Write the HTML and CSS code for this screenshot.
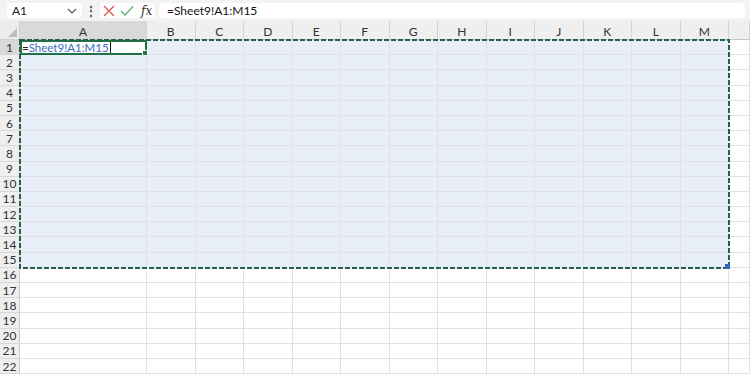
FILE: index.html
```html
<!DOCTYPE html>
<html>

<head>
    <title>Sheet</title>
    <link rel="stylesheet" href="styles.css">
</head>

<body>
    <div class="toolbar">
        <div class="name-box">
            <span>A1</span>
            <svg class="chevron" width="10" height="6" viewBox="0 0 10 6"><path d="M1 1 L5 5 L9 1" fill="none" stroke="#555" stroke-width="1.2"/></svg>
        </div>
        <div class="dots">&#8942;</div>
        <div class="fn-box">
            <svg width="12" height="12" viewBox="0 0 12 12"><path d="M1 1 L11 11 M11 1 L1 11" stroke="#d9534f" stroke-width="1.3" fill="none"/></svg>
            <svg width="14" height="12" viewBox="0 0 14 12"><path d="M1 6 L5 10 L13 1.5" stroke="#5cae6e" stroke-width="1.3" fill="none"/></svg>
            <span class="fx">fx</span>
        </div>
        <div class="formula">=Sheet9!A1:M15</div>
    </div>

    <div class="sheet" id="sheet">
        <div class="grid" id="grid"></div>
        <svg class="marquee" width="711" height="230" viewBox="0 0 711 230">
            <rect x="1" y="1" width="709" height="228" fill="none" stroke="#24624e" stroke-width="2" stroke-dasharray="5 2"/>
            <rect x="706" y="225" width="5" height="5" fill="#2f6cc0"/>
        </svg>
    </div>

    <script>
        const cols = ['A', 'B', 'C', 'D', 'E', 'F', 'G', 'H', 'I', 'J', 'K', 'L', 'M', ''];
        const grid = document.getElementById('grid');

        function cell(cls, text) {
            const d = document.createElement('div');
            d.className = cls;
            if (text) d.textContent = text;
            grid.appendChild(d);
            return d;
        }

        const corner = cell('corner');
        corner.innerHTML = '<svg width="9" height="9" viewBox="0 0 9 9"><path d="M9 0 L9 9 L0 9 Z" fill="#bdbdbd"/></svg>';
        cols.forEach((c, i) => cell(i === 0 ? 'col-head active' : 'col-head', c));

        for (let r = 1; r <= 22; r++) {
            cell(r === 1 ? 'row-head active' : 'row-head', String(r));
            cols.forEach((c, i) => {
                let cls = 'cell';
                if (r <= 15 && i < 13) cls += ' sel';
                const d = cell(cls);
                if (r === 1 && i === 0) {
                    d.className = 'cell current';
                    d.innerHTML = '<span class="eq">=</span><span class="ref">Sheet9!A1:M15</span><span class="caret"></span><span class="handle"></span>';
                }
            });
        }
    </script>

</body>

</html>
```

FILE: styles.css
```css
body {
    margin: 0;
    font-family: Lato, "Open Sans", sans-serif;
    background: #fff;
    width: 750px;
    height: 375px;
    overflow: hidden;
}

.toolbar {
    height: 21px;
    background-color: #f3f3f3;
    display: flex;
    align-items: center;
    padding-left: 7px;
    box-sizing: border-box;
}

.name-box {
    width: 75px;
    height: 15px;
    background: #fff;
    border-radius: 3px;
    display: flex;
    align-items: center;
    justify-content: space-between;
    padding: 0 5px 0 5px;
    box-sizing: border-box;
    font-size: 12px;
    color: #222;
}

.dots {
    width: 18px;
    text-align: center;
    font-size: 12px;
    font-weight: bold;
    color: #555;
}

.fn-box {
    width: 55px;
    height: 15px;
    background: #fff;
    border-radius: 3px;
    display: flex;
    align-items: center;
    gap: 5px;
    padding-left: 3px;
    box-sizing: border-box;
}

.fx {
    font-family: "DejaVu Serif", "Liberation Serif", serif;
    font-style: italic;
    font-size: 12px;
    color: #333;
    margin-left: 2px;
}

.formula {
    flex: 1;
    height: 15px;
    margin: 0 5px 0 4px;
    background: #fff;
    border-radius: 3px;
    font-size: 12px;
    line-height: 15px;
    padding-left: 8px;
    color: #111;
}

.sheet {
    position: relative;
}

.grid {
    display: grid;
    grid-template-columns: 20px 127px repeat(12, 48.5px) 1fr;
    grid-template-rows: 19px repeat(22, 15.2px);
}

.corner {
    background: #ececec;
    border-right: 1px solid #d0d0d0;
    border-bottom: 1px solid #d0d0d0;
    box-sizing: border-box;
    display: flex;
    align-items: flex-end;
    justify-content: flex-end;
    padding: 0 2px 2px 0;
}

.col-head,
.row-head {
    background: #efefef;
    color: #333;
    font-size: 12px;
    box-sizing: border-box;
    display: flex;
    align-items: center;
    justify-content: center;
}

.col-head {
    border-right: 1px solid #d4d4d4;
    border-bottom: 1px solid #c8c8c8;
    padding-top: 2px;
}

.row-head {
    border-right: 1px solid #c8c8c8;
    border-bottom: 1px solid #d8d8d8;
}

.col-head.active,
.row-head.active {
    background: #d9d9d9;
}

.cell {
    border-right: 1px solid #e1e1e1;
    border-bottom: 1px solid #e1e1e1;
    box-sizing: border-box;
}

.cell.sel {
    background: #e8eef8;
}

.cell.current {
    position: relative;
    border: 2px solid #217346;
    background: #fff;
    font-size: 11.5px;
    line-height: 11px;
    padding-left: 0;
    white-space: nowrap;
    display: flex;
    align-items: center;
    overflow: visible;
}

.eq {
    color: #222;
}

.ref {
    color: #3a6cc0;
}

.caret {
    width: 1px;
    height: 11px;
    background: #111;
    margin-left: 1px;
}

.handle {
    position: absolute;
    right: -3px;
    bottom: -3px;
    width: 4px;
    height: 4px;
    background: #217346;
    border: 1px solid #fff;
}

.marquee {
    position: absolute;
    left: 19px;
    top: 18px;
}
```
